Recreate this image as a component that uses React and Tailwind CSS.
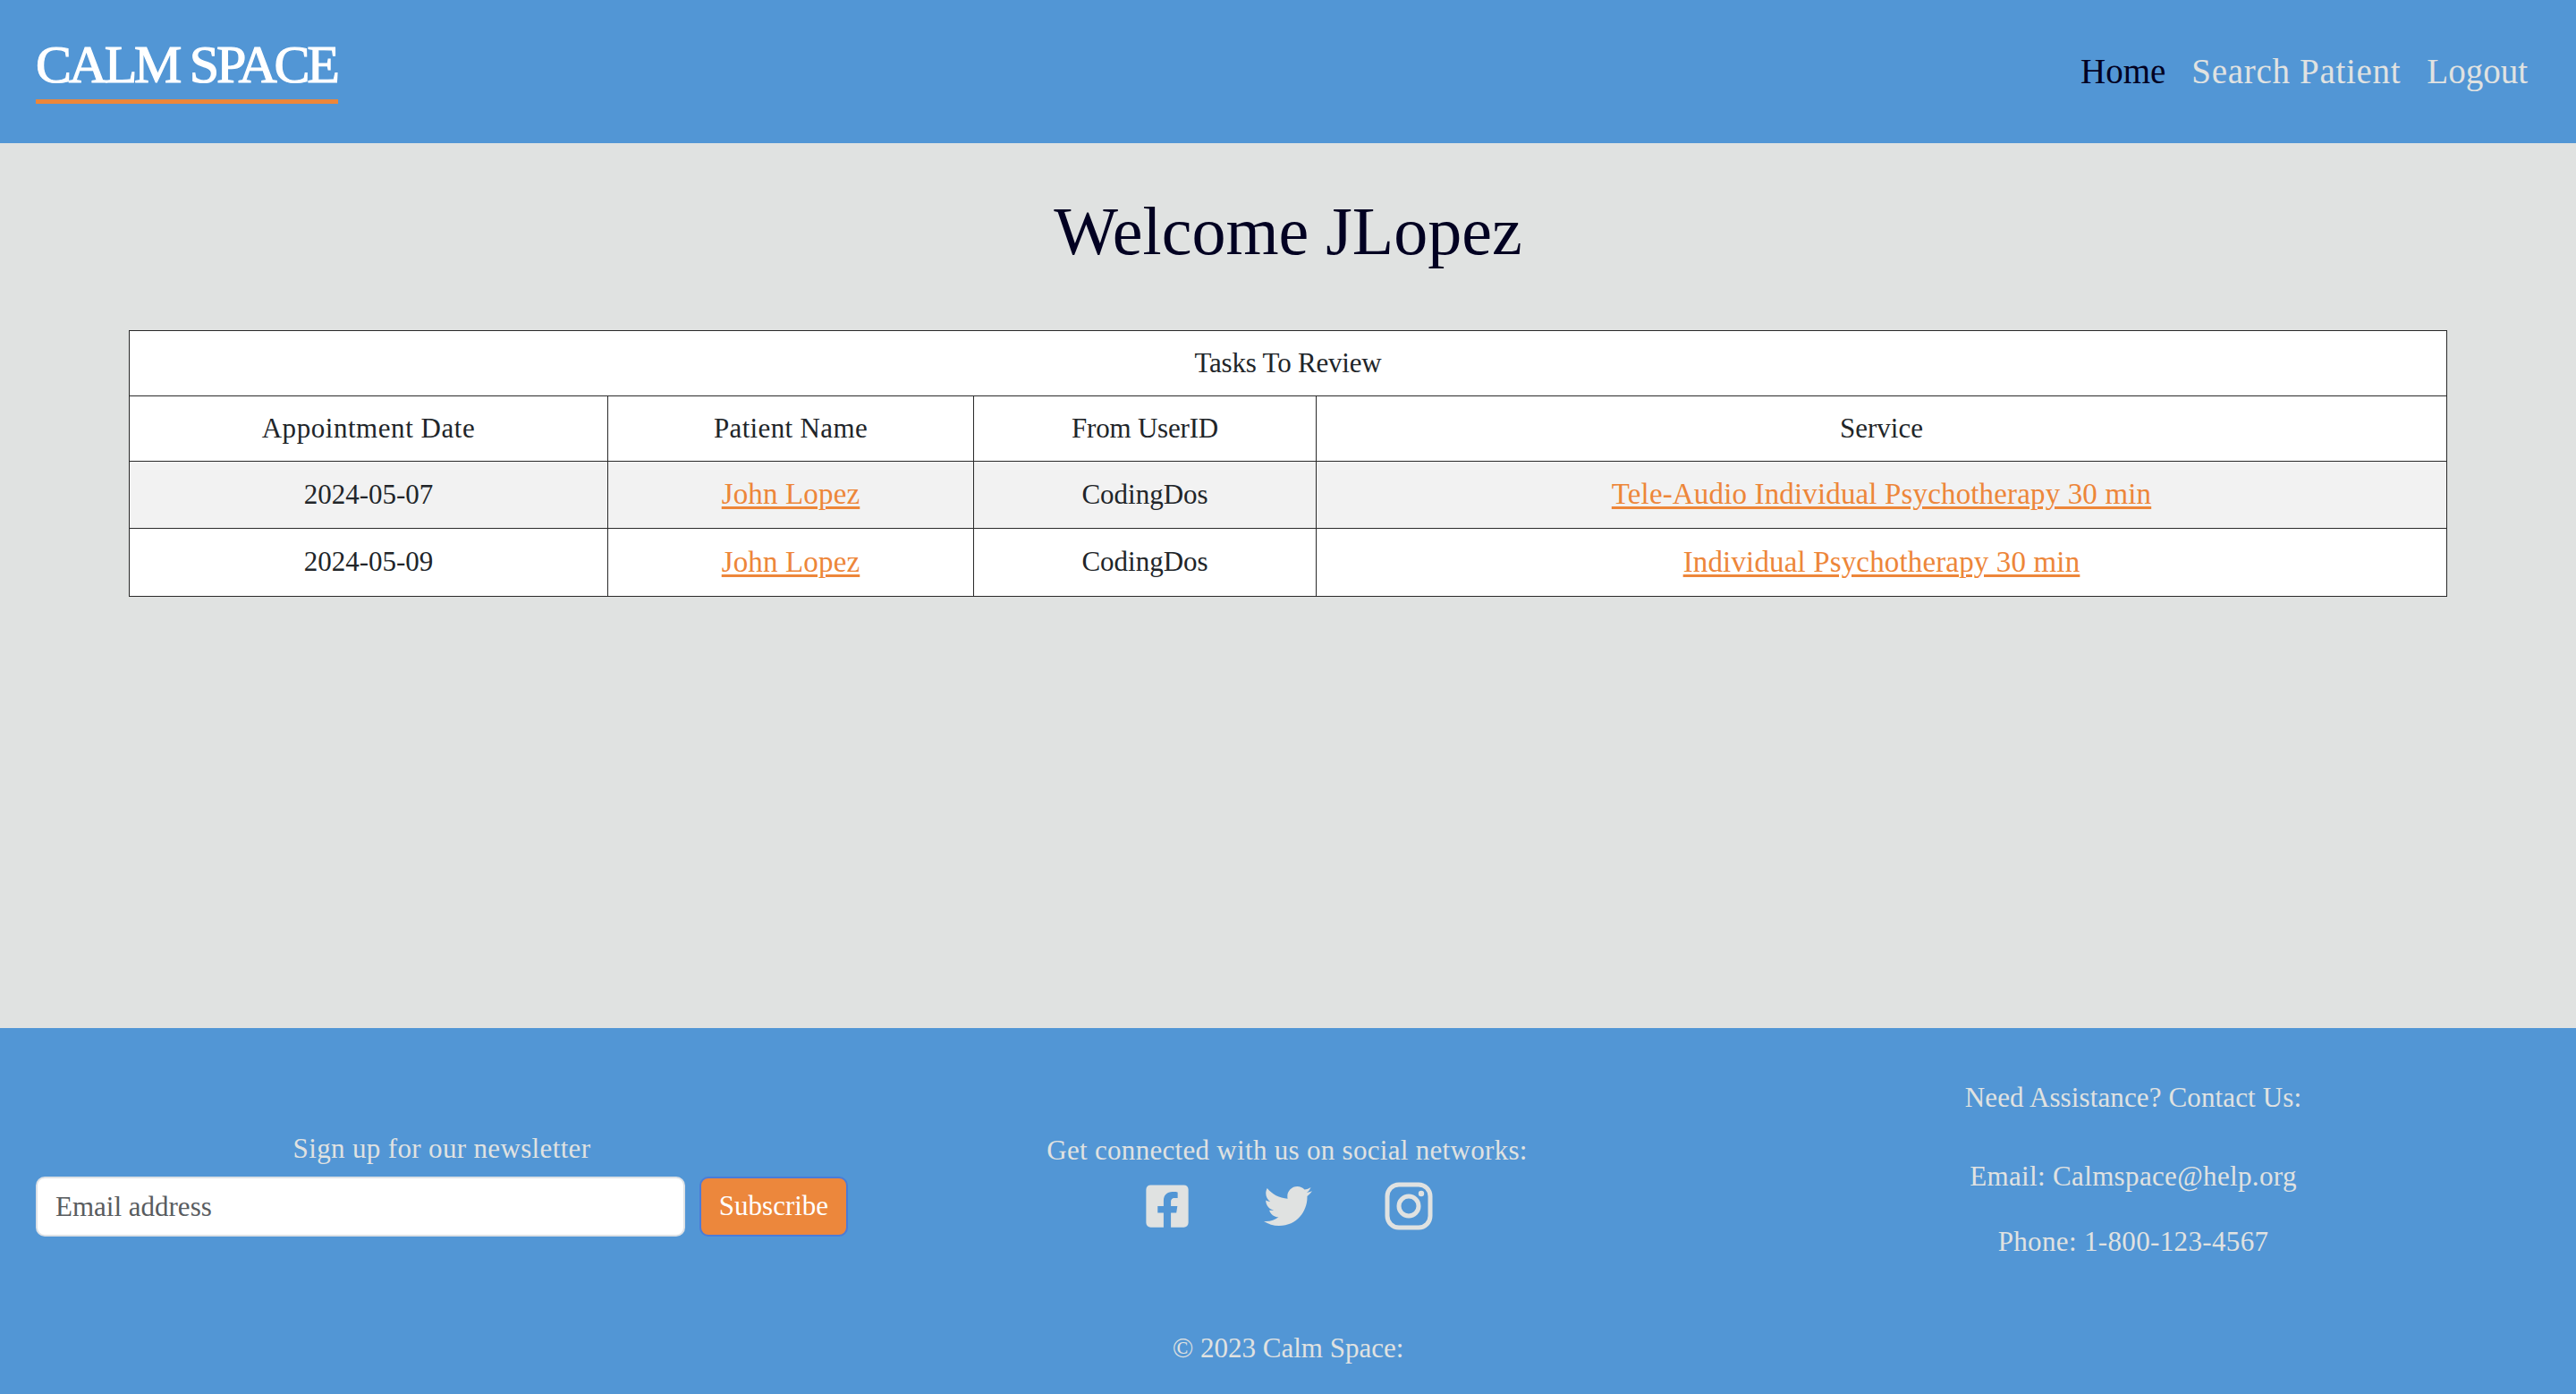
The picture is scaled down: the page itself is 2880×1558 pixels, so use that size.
import React from "react";
import { FaFacebookSquare, FaTwitter } from "react-icons/fa";

const serif = "font-['Liberation_Serif','Noto_Serif',serif]";

function Instagram() {
  return (
    <svg width="54" height="54" viewBox="0 0 54 54" fill="none" stroke="#e0e2e1" strokeWidth="5">
      <rect x="3" y="3" width="48" height="48" rx="13" />
      <circle cx="27" cy="27" r="11" />
      <circle cx="41" cy="13" r="3.2" fill="#e0e2e1" stroke="none" />
    </svg>
  );
}

const Link = ({ children }) => (
  <a href="#" className="text-[33px] tracking-[0.15px] text-[#ed8639] underline decoration-[3px] underline-offset-[3px]">{children}</a>
);

const cell = "border border-[#2a2a2a] text-center font-normal p-0";

export default function App() {
  return (
    <div className={`${serif} flex min-h-screen flex-col bg-[#e0e2e1] text-[#212529]`}>
      <header className="flex h-[160px] items-center justify-between bg-[#5296d5] pl-10 pr-[54px]">
        <div className="mb-[16px] w-[338px] whitespace-nowrap border-b-[5px] border-[#ed8639] pt-[5px] text-[60px] leading-[77px] tracking-[-3.3px] text-white [-webkit-text-stroke:1.2px_white]">
          CALM SPACE
        </div>
        <nav className="flex gap-[29px] text-[39px] text-[#e0e2e1]">
          <a href="#" className="text-[#020122]">Home</a>
          <a href="#" className="tracking-[0.7px]">Search Patient</a>
          <a href="#">Logout</a>
        </nav>
      </header>

      <main className="flex flex-1 flex-col items-center px-[144px]">
        <h1 className="mt-[50px] mb-[63px] text-[76px] leading-[96px] text-[#020122]">Welcome JLopez</h1>
        <table className="w-full table-fixed border-collapse bg-white text-[31px]">
          <colgroup>
            <col className="w-[535px]" />
            <col className="w-[409px]" />
            <col className="w-[383px]" />
            <col />
          </colgroup>
          <thead>
            <tr className="h-[73px]"><th colSpan={4} className={`${cell} tracking-[-0.2px]`}>Tasks To Review</th></tr>
            <tr className="h-[73px]">
              <th className={`${cell} tracking-[0.55px]`}>Appointment Date</th>
              <th className={`${cell} tracking-[0.35px]`}>Patient Name</th>
              <th className={`${cell} tracking-[-0.2px]`}>From UserID</th>
              <th className={cell}>Service</th>
            </tr>
          </thead>
          <tbody>
            <tr className="h-[75px] bg-[#f2f2f2]">
              <td className={cell}>2024-05-07</td>
              <td className={cell}><Link>John Lopez</Link></td>
              <td className={cell}>CodingDos</td>
              <td className={cell}><Link>Tele-Audio Individual Psychotherapy 30 min</Link></td>
            </tr>
            <tr className="h-[76px]">
              <td className={cell}>2024-05-09</td>
              <td className={cell}><Link>John Lopez</Link></td>
              <td className={cell}>CodingDos</td>
              <td className={cell}><Link>Individual Psychotherapy 30 min</Link></td>
            </tr>
          </tbody>
        </table>
      </main>

      <footer className="h-[409px] bg-[#5296d5] text-[31px] text-[#e0e2e1]">
        <div className="grid grid-cols-[908px_1fr_910px] px-10">
          <div className="pt-[116px] text-center">
            <p className="mb-[12px] leading-[38px] tracking-[0.35px]">Sign up for our newsletter</p>
            <form className="flex gap-[16px]">
              <input
                placeholder="Email address"
                className="h-[67px] w-[726px] rounded-[10px] border-2 border-[#dee2e6] bg-white px-[20px] text-[31px] text-[#212529] placeholder:text-[#595c5f]"
              />
              <button type="button" className="h-[67px] w-[166px] rounded-[10px] border-2 border-[#4a7bd8] bg-[#ec873c] text-[31px] text-white">
                Subscribe
              </button>
            </form>
          </div>
          <div className="pt-[118px] text-center">
            <p className="leading-[38px] tracking-[0.3px]">Get connected with us on social networks:</p>
            <div className="ml-[2px] mt-[16px] flex justify-center gap-[81px]">
              <FaFacebookSquare size={54} color="#e0e2e1" />
              <FaTwitter size={54} color="#e0e2e1" />
              <Instagram />
            </div>
          </div>
          <div className="pt-[59px] text-center leading-[38px]">
            <p className="tracking-[0.13px]">Need Assistance? Contact Us:</p>
            <p className="mt-[50px] tracking-[0.35px]">Email: Calmspace@help.org</p>
            <p className="mt-[35px] tracking-[0.35px]">Phone: 1-800-123-4567</p>
          </div>
        </div>
        <p className="mt-[81px] text-center leading-[38px]">© 2023 Calm Space:</p>
      </footer>
    </div>
  );
}
